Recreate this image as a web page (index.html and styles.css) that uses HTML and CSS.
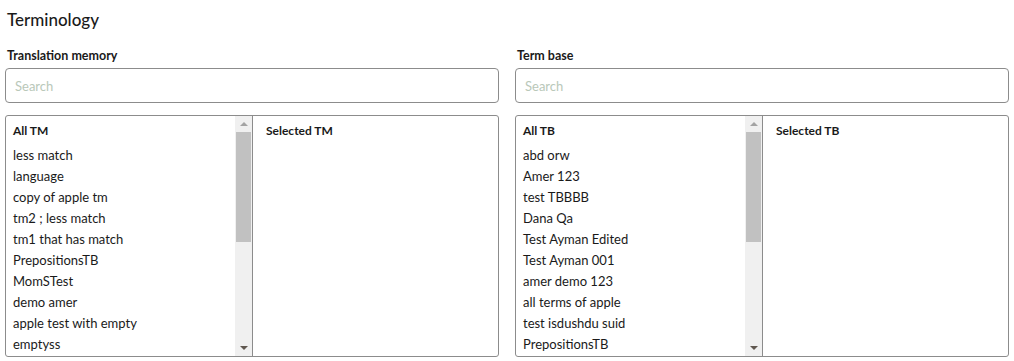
FILE: index.html
```html
<!DOCTYPE html>
<html lang="en">
<head>
    <meta charset="UTF-8">
    <meta name="viewport" content="width=device-width, initial-scale=1.0">
    <title>Terminology</title>
    <link rel="stylesheet" href="styles.css">
</head>
<body>
    <h1 class="page-title">Terminology</h1>
    <div class="columns">
        <div class="column">
            <label class="field-label">Translation memory</label>
            <input class="search" type="text" placeholder="Search">
            <div class="picker">
                <div class="pane pane-all">
                    <ul class="items">
                        <li class="items-head">All TM</li>
                        <li>less match</li>
                        <li>language</li>
                        <li>copy of apple tm</li>
                        <li>tm2 ; less match</li>
                        <li>tm1 that has match</li>
                        <li>PrepositionsTB</li>
                        <li>MomSTest</li>
                        <li>demo amer</li>
                        <li>apple test with empty</li>
                        <li>emptyss</li>
                    </ul>
                    <div class="scrollbar">
                        <span class="arrow arrow-up"></span>
                        <span class="thumb"></span>
                        <span class="arrow arrow-down"></span>
                    </div>
                </div>
                <div class="pane pane-selected">
                    <ul class="items">
                        <li class="items-head">Selected TM</li>
                    </ul>
                </div>
            </div>
        </div>
        <div class="column">
            <label class="field-label">Term base</label>
            <input class="search" type="text" placeholder="Search">
            <div class="picker">
                <div class="pane pane-all">
                    <ul class="items">
                        <li class="items-head">All TB</li>
                        <li>abd orw</li>
                        <li>Amer 123</li>
                        <li>test TBBBB</li>
                        <li>Dana Qa</li>
                        <li>Test Ayman Edited</li>
                        <li>Test Ayman 001</li>
                        <li>amer demo 123</li>
                        <li>all terms of apple</li>
                        <li>test isdushdu suid</li>
                        <li>PrepositionsTB</li>
                    </ul>
                    <div class="scrollbar">
                        <span class="arrow arrow-up"></span>
                        <span class="thumb"></span>
                        <span class="arrow arrow-down"></span>
                    </div>
                </div>
                <div class="pane pane-selected">
                    <ul class="items">
                        <li class="items-head">Selected TB</li>
                    </ul>
                </div>
            </div>
        </div>
    </div>
</body>
</html>
```

FILE: styles.css
```css
body {
    font-family: 'Lato', 'Open Sans', sans-serif;
    color: #1a1a1a;
    background-color: #fff;
    margin: 0;
    padding: 9px 5px 0 5px;
}
.page-title {
    font-size: 17px;
    font-weight: 500;
    margin: 0 0 0 2px;
    line-height: 22px;
}
.columns {
    display: flex;
    gap: 16px;
    margin-top: 17px;
}
.column {
    flex: 1;
    display: flex;
    flex-direction: column;
}
.field-label {
    font-size: 12.5px;
    font-weight: 700;
    line-height: 16px;
    margin-left: 2px;
}
.search {
    box-sizing: border-box;
    height: 35px;
    margin-top: 4px;
    border: 1px solid #8c8c8c;
    border-radius: 4px;
    padding: 0 9px;
    font-family: inherit;
    font-size: 13px;
}
.search::placeholder {
    color: #b9c8b9;
}
.picker {
    box-sizing: border-box;
    display: flex;
    height: 242px;
    margin-top: 12px;
    border: 1px solid #8c8c8c;
    border-radius: 3px;
    overflow: hidden;
}
.pane {
    flex: 1;
    display: flex;
}
.pane-all {
    flex: 0 0 246px;
    border-right: 1px solid #8c8c8c;
}
.items {
    flex: 1;
    list-style: none;
    margin: 0;
    padding: 4px 0 0 7px;
    font-size: 13px;
    line-height: 21px;
}
.items-head {
    font-weight: 700;
    font-size: 12px;
    margin-bottom: 4px;
}
.pane-selected .items {
    padding-left: 13px;
}
.scrollbar {
    width: 17px;
    background-color: #f0f0f0;
    display: flex;
    flex-direction: column;
    align-items: center;
}
.arrow {
    width: 0;
    height: 0;
    border-left: 4px solid transparent;
    border-right: 4px solid transparent;
    margin: 6px 0;
}
.arrow-up {
    border-bottom: 4px solid #a3a3a3;
}
.arrow-down {
    border-top: 4px solid #605850;
    margin-top: auto;
}
.thumb {
    width: 15px;
    height: 110px;
    background-color: #c1c1c1;
}
```
